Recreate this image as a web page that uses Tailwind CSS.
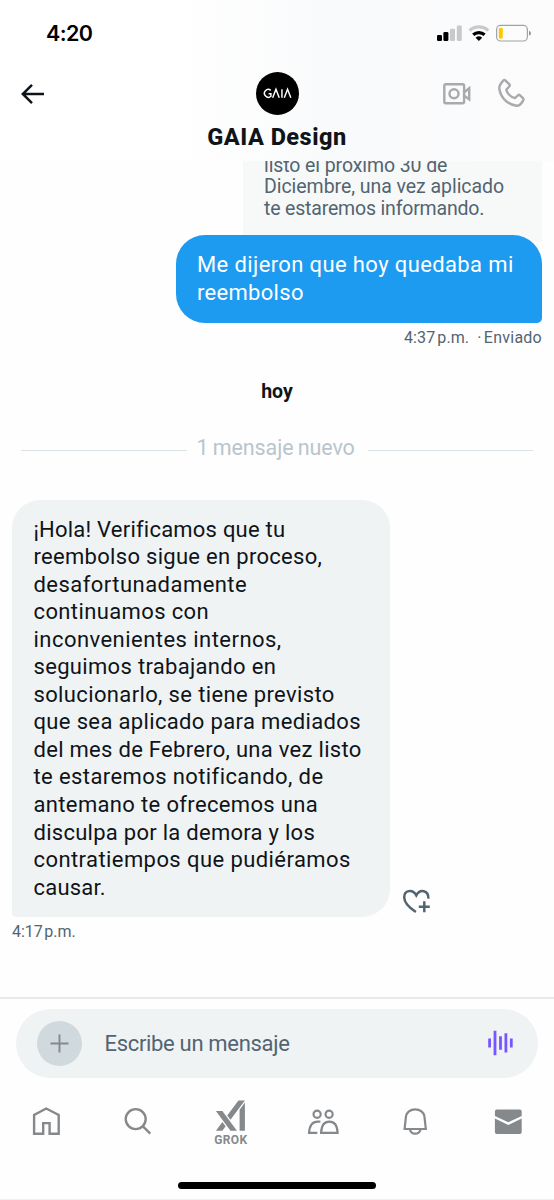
<!DOCTYPE html>
<html lang="es">
<head>
<meta charset="utf-8">
<title>GAIA Design</title>
<script src="https://cdn.jsdelivr.net/npm/@tailwindcss/browser@4"></script>
</head>
<body class="bg-white">
<div class="w-[554px] h-[1200px] flex flex-col overflow-hidden bg-[#fefefe] font-['Roboto',sans-serif] text-[#0f1419]">

  <header class="h-[161px] shrink-0 flex flex-col bg-linear-to-r from-white from-30% via-[#f9fafb] via-60% to-[#fcfcfd]">
    <!-- status bar -->
    <div class="h-[66px] flex justify-between pl-[46px] pr-[22px]">
      <span class="pt-[20px] leading-[27px] text-[21.5px] font-semibold font-['Inter',sans-serif] tracking-[-0.6px] text-black">4:20</span>
      <svg class="mt-[20px]" width="98" height="26" viewBox="434 20 98 26" fill="none">
        <rect x="437" y="35" width="5" height="6" rx="1.3" fill="#000"/>
        <rect x="443.4" y="32" width="5" height="9" rx="1.3" fill="#000"/>
        <rect x="450" y="28.7" width="5" height="12.3" rx="1.3" fill="#c9c9ca"/>
        <rect x="456.8" y="25.6" width="5" height="15.4" rx="1.3" fill="#c9c9ca"/>
        <path d="M469.6 30.6A13.6 13.6 0 0 1 488.2 30.6" stroke="#c9c9ca" stroke-width="3.2"/>
        <path d="M473.2 34.8A8.5 8.5 0 0 1 484.6 34.8" stroke="#000" stroke-width="3.2"/>
        <path d="M478.9 41L475.6 37.7A5 5 0 0 1 482.2 37.7Z" fill="#000"/>
        <rect x="496.6" y="25.4" width="30.8" height="15.6" rx="4" stroke="#a2a3a5" stroke-width="1.2"/>
        <rect x="498.8" y="27.7" width="4" height="11" rx="1.6" fill="#fec700"/>
        <path d="M529 31C531.6 31.6 531.6 35 529 35.6Z" fill="#8f9092"/>
      </svg>
    </div>
    <!-- navigation -->
    <div class="flex-1 grid grid-cols-[1fr_180px_1fr]">
      <svg class="mt-[17px] ml-[19px]" width="26" height="22" viewBox="19 83 26 22" fill="none" stroke="#0f1419" stroke-width="2.5"><path d="M44 94H22.8M32 84.8L22.8 94L32 103.2"/></svg>
      <div class="flex flex-col items-center">
        <div class="mt-[6px] size-[43px] rounded-full bg-black flex items-center justify-center">
          <svg width="29" height="13" viewBox="0 0 30 13" fill="none" stroke="#fff" stroke-width="1.5"><path d="M8 3.2A4 4 0 1 0 8.2 9.3V6.7H5.8M10 10.8L13.4 2L16.8 10.8M19.6 2V10.8M22 10.8L25.4 2L28.8 10.8"/></svg>
        </div>
        <h1 class="mt-[5px] leading-[34px] text-[23.5px] font-extrabold whitespace-nowrap tracking-[0.5px]">GAIA Design</h1>
      </div>
      <div class="flex justify-end gap-[26px] pr-[29px] pt-[12px]">
        <svg width="29" height="30" viewBox="443 78 29 30" fill="none" stroke="#a9aaac" stroke-width="2.4"><rect x="445.3" y="84.2" width="19.8" height="19" rx="1.5"/><circle cx="455" cy="93.8" r="4.5"/><path d="M465.2 92.2L470.2 88.2V99.4L465.2 95.6"/></svg>
        <svg width="28" height="30" viewBox="497 78 28 30" fill="none" stroke="#a9aaac" stroke-width="2.4" stroke-linejoin="round"><path d="M505.3 80.3L509.4 84.4Q510.2 85.3 509.4 86.3L506.3 89.7Q506.8 92.4 509.4 95T514.8 98.1L518 95.3Q519 94.4 520 95.3L523 98.2Q524 99.3 523.2 100.4Q520.3 106 516.6 105.8C507.5 104.5 500.4 97.5 499.3 88.5C499 85.5 501 83 503.5 80.4Q504.4 79.5 505.3 80.3Z"/></svg>
      </div>
    </div>
  </header>

  <main class="h-[836px] shrink-0 flex flex-col overflow-hidden">
    <!-- outgoing message with its quoted text -->
    <section class="flex flex-col items-end pr-[12px]">
      <div class="h-[81px] w-[299px] bg-[#f7f9f9] overflow-hidden pl-[21px] text-[19.5px] leading-[21.4px] text-[#536471] whitespace-nowrap -mb-[8px]">
        <div class="-mt-[6px] flex flex-col items-start">
          <span class="tracking-[-0.1px]">listo el próximo 30 de</span>
          <span class="tracking-[-0.05px]">Diciembre, una vez aplicado</span>
          <span class="tracking-[-0.18px]">te estaremos informando.</span>
        </div>
      </div>
      <div class="mt-[0.5px] w-[366.5px] h-[88.5px] rounded-[29px] rounded-br-[5px] bg-[#1d9bf0] pt-[16.4px] pl-[21.5px] text-[22px] leading-[28px] text-white whitespace-nowrap flex flex-col items-start">
        <span class="tracking-[0.38px]">Me dijeron que hoy quedaba mi</span>
        <span class="tracking-[0.3px]">reembolso</span>
      </div>
      <div class="mt-[5px] leading-[20px] text-[16px] text-[#536471] flex gap-[8px] whitespace-nowrap"><span class="[word-spacing:-2px] tracking-[0.1px]">4:37 p.m.</span><span class="[word-spacing:-2px] tracking-[0.25px]">· Enviado</span></div>
    </section>

    <div class="mt-[31.5px] h-[24px] text-center text-[19.5px] leading-[24px] font-bold">hoy</div>

    <div class="mt-[30px] h-[28px] flex items-center px-[21px] gap-[11px]">
      <i class="mt-[5px] flex-1 h-px bg-[#dbe3e7]"></i>
      <span class="w-[159px] -ml-px mr-px text-[21.5px] leading-[28px] text-[#b9c5cd] whitespace-nowrap tracking-[-0.1px] [word-spacing:-1px]">1 mensaje nuevo</span>
      <i class="mt-[5px] flex-1 h-px bg-[#dbe3e7]"></i>
    </div>

    <!-- incoming message -->
    <section class="mt-[38px] pl-[12px] flex items-end gap-[12px]">
      <div class="w-[377.5px] h-[417px] rounded-[28px] rounded-bl-[4px] bg-[#eff3f4] pt-[16px] pl-[21.5px] text-[22px] leading-[27.55px] whitespace-nowrap flex flex-col items-start">
        <span class="tracking-[0.22px]">¡Hola! Verificamos que tu</span>
        <span class="tracking-[0.3px]">reembolso sigue en proceso,</span>
        <span class="tracking-[0.46px]">desafortunadamente</span>
        <span class="tracking-[0.38px]">continuamos con</span>
        <span class="tracking-[0.46px]">inconvenientes internos,</span>
        <span class="tracking-[0.32px]">seguimos trabajando en</span>
        <span class="tracking-[0.36px]">solucionarlo, se tiene previsto</span>
        <span class="tracking-[0.35px]">que sea aplicado para mediados</span>
        <span class="tracking-[0.29px]">del mes de Febrero, una vez listo</span>
        <span class="tracking-[0.4px]">te estaremos notificando, de</span>
        <span class="tracking-[0.35px]">antemano te ofrecemos una</span>
        <span class="tracking-[0.27px]">disculpa por la demora y los</span>
        <span class="tracking-[0.42px]">contratiempos que pudiéramos</span>
        <span class="tracking-[0.2px]">causar.</span>
      </div>
      <svg class="mb-[2px]" width="30" height="28" viewBox="402 887 30 28" fill="none" stroke="#536471" stroke-width="2.5"><path d="M415.9 912Q404.2 904.3 404.2 897.2C404.2 890.2 412.6 888.6 416.3 895.4C420 888.6 428.6 890.2 428.4 898.6M424.3 901.3V912.2M418.8 906.8H429.8"/></svg>
    </section>
    <div class="pl-[12px] mt-[5.5px] leading-[20px] text-[16px] text-[#536471] [word-spacing:-2.5px]">4:17 p.m.</div>
  </main>

  <footer class="flex-1 flex flex-col border-t-2 border-[#e6eaec]">
    <div class="mt-[9.5px] mx-[16px] h-[69px] rounded-full bg-[#eff3f4] flex items-center pl-[21px] pr-[24px]">
      <div class="size-[45px] rounded-full bg-[#cfd9de] flex items-center justify-center">
        <svg width="19" height="19" viewBox="0 0 19 19" stroke="#85888d" stroke-width="1.9"><path d="M9.5 .5V18.5M.5 9.5H18.5"/></svg>
      </div>
      <span class="ml-[22.5px] mt-[2px] flex-1 text-[22px] leading-[28px] text-[#536471] whitespace-nowrap tracking-[-0.32px]">Escribe un mensaje</span>
      <svg width="26" height="26" viewBox="488 1030.5 26 26" fill="#7856ff"><path d="M488.2 1039h2.8v9h-2.8zM493.6 1031.3h2.8v24.4h-2.8zM499.1 1036.7h2.8v13.6h-2.8zM504.5 1033.7h2.8v19.4h-2.8zM509.9 1039h2.8v9h-2.8z"/></svg>
    </div>

    <nav class="h-[72px] mt-[17px] flex">
      <div class="flex-1"><svg width="92" height="60" viewBox="0 1095 92 60" fill="none" stroke="#86898c" stroke-width="2.4"><path d="M34.1 1133.7V1114.9L46.2 1108.5L58.7 1114.9V1133.7H49.6V1123.1H43.2V1133.7Z"/></svg></div>
      <div class="flex-1"><svg width="92" height="60" viewBox="92.3 1095 92 60" fill="none" stroke="#86898c" stroke-width="2.4"><circle cx="136" cy="1119.1" r="10"/><path d="M143.2 1126.3L150.6 1133.7"/></svg></div>
      <div class="flex-1 flex flex-col items-center">
        <svg class="mt-[4.5px]" width="34.8" height="33" viewBox="0 0 24 24" preserveAspectRatio="none" fill="#86898c"><path d="M6.469 8.776L16.512 23h-4.464L2.005 8.776H6.47zm-.004 7.9l2.233 3.164L6.467 23H2l4.465-6.324zM22 2.582V23h-3.659V7.764L22 2.582zM22 1l-9.952 14.095-2.233-3.163L17.533 1H22z"/></svg>
        <span class="mt-px text-[12px] leading-[14px] font-bold text-[#86898c] tracking-[0.4px]">GROK</span>
      </div>
      <div class="flex-1"><svg width="92" height="60" viewBox="277 1095 92 60" fill="none" stroke="#86898c" stroke-width="2.2"><circle cx="317.1" cy="1114.3" r="3.6"/><circle cx="329.1" cy="1114.3" r="3.6"/><path d="M317.3 1132.8H309.1Q309.6 1121.8 317.7 1121.6H320.4M321.1 1132.8Q321.6 1121.6 329.3 1121.6Q337.2 1121.6 337.6 1132.8Z"/></svg></div>
      <div class="flex-1"><svg width="92" height="60" viewBox="369.3 1095 92 60" fill="none" stroke="#86898c" stroke-width="2.2"><path d="M404.9 1129L406.1 1117.8C406.7 1106.5 424.3 1106.5 424.9 1117.8L426.1 1129ZM410.2 1129.4C411.6 1135 419.4 1135 420.8 1129.4"/></svg></div>
      <div class="flex-1"><svg width="92" height="60" viewBox="461.6 1095 92 60" fill="#86898c"><path d="M494.5 1116V1111.5Q494.5 1109.6 496.4 1109.6H519.4Q521.3 1109.6 521.3 1111.5V1116L507.9 1122.3ZM494.5 1118.6L507.9 1124.9L521.3 1118.6V1132Q521.3 1133.9 519.4 1133.9H496.4Q494.5 1133.9 494.5 1132Z"/></svg></div>
    </nav>
    <div class="mt-[15px] mx-auto w-[198px] h-[7px] rounded-full bg-black shrink-0"></div>
    <div class="mt-auto h-px bg-[#eeeff0]"></div>
  </footer>
</div>
</body>
</html>
